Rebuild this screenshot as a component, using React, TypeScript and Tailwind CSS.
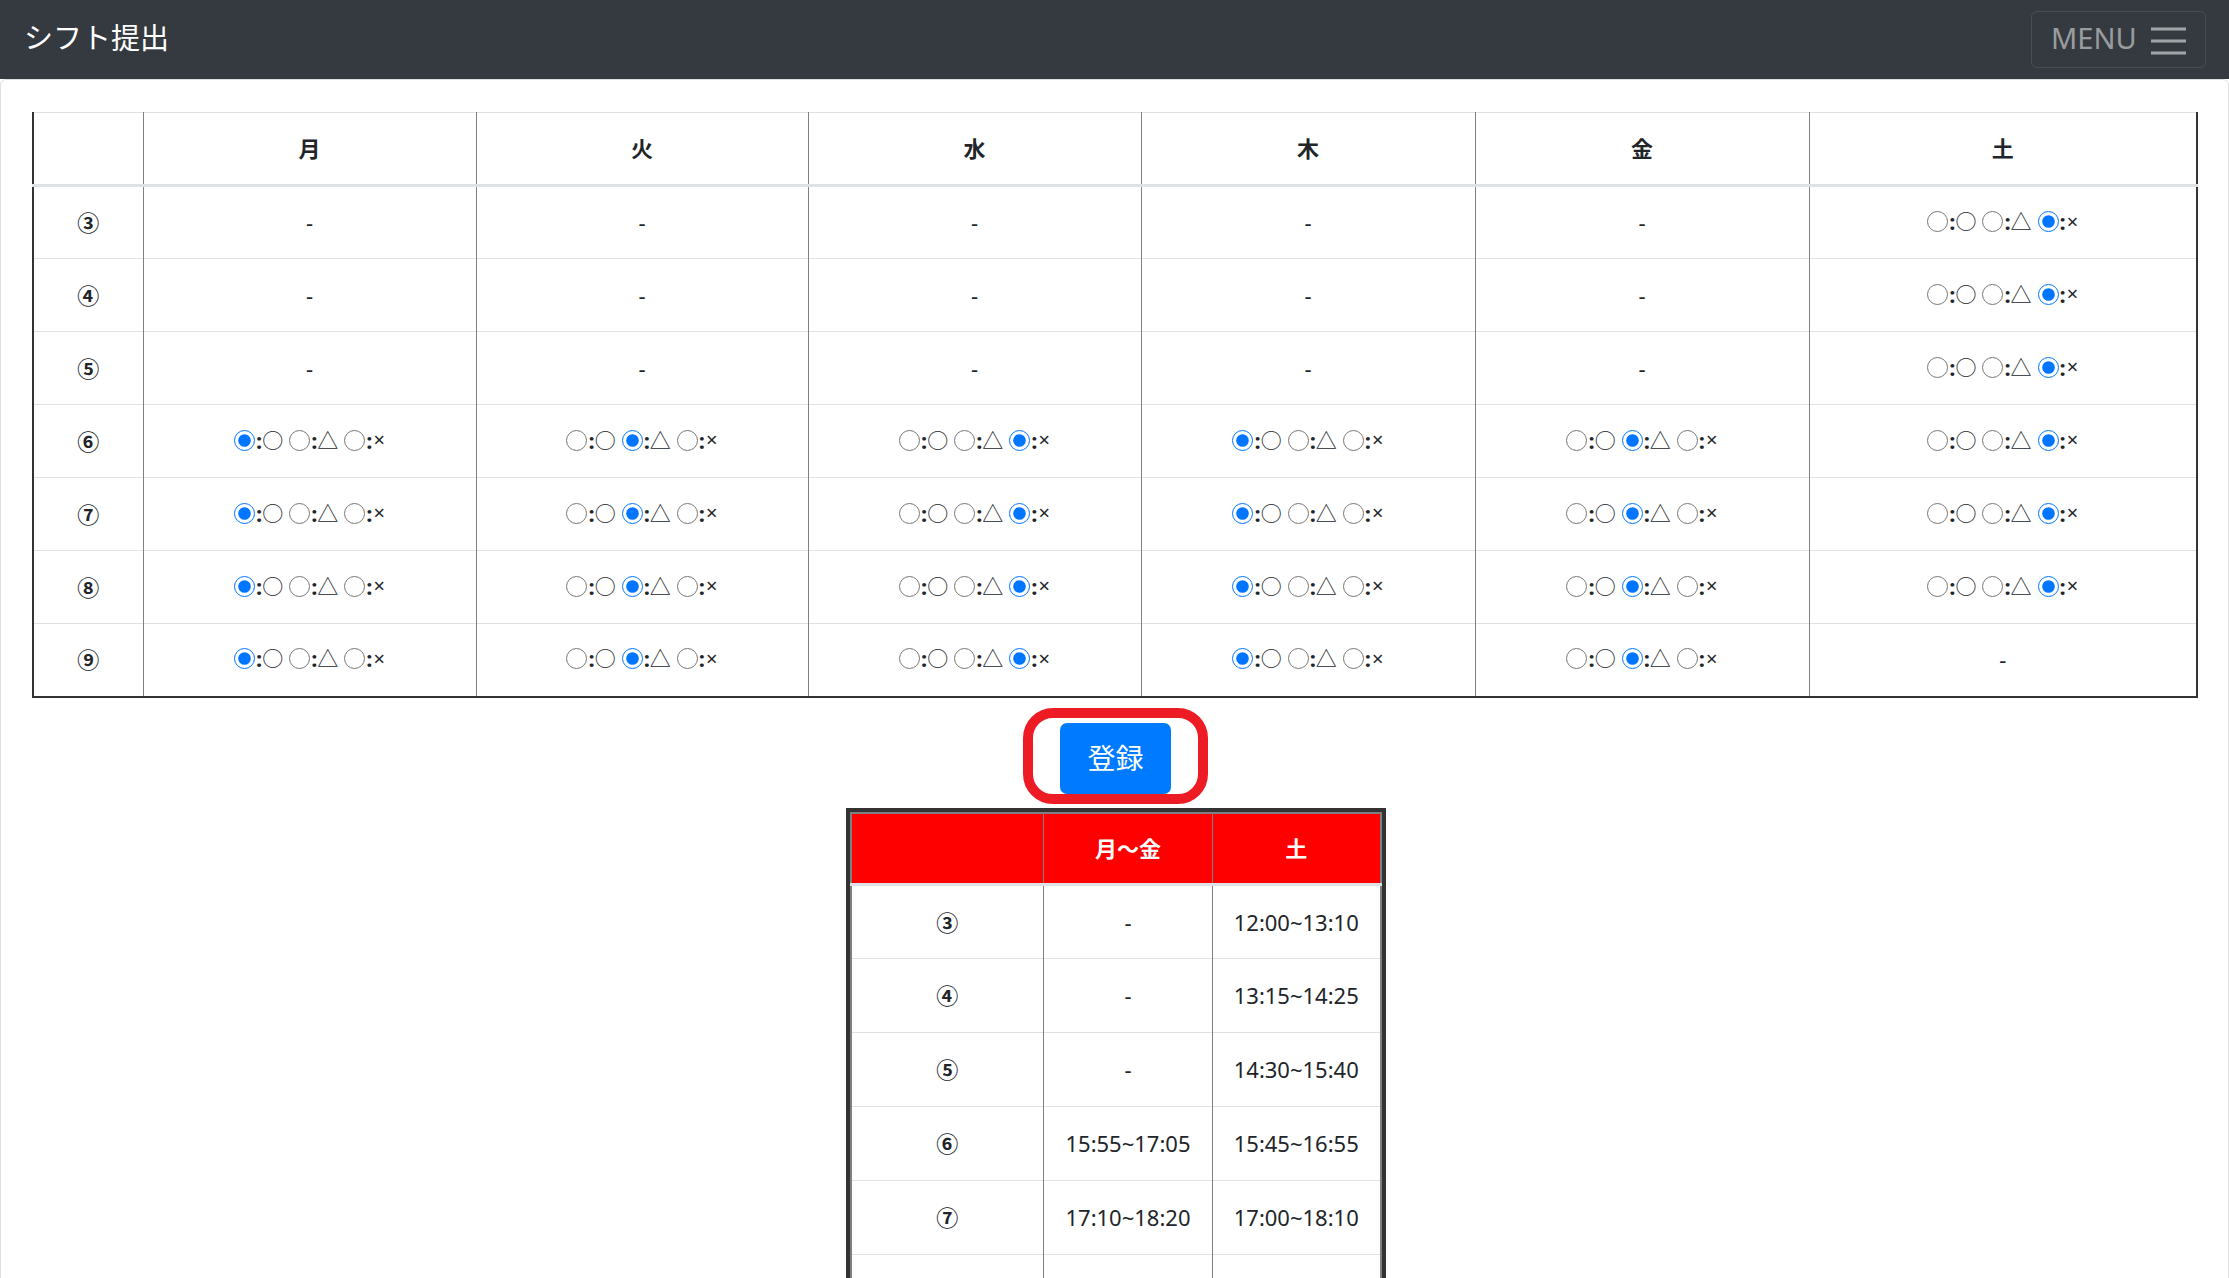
import React from "react";

const days = ["月", "火", "水", "木", "金", "土"];
const marks = ["○", "△", "×"];

// null = 入力なし, 0 = ○, 1 = △, 2 = ×
const shifts: { label: string; values: (number | null)[] }[] = [
  { label: "③", values: [null, null, null, null, null, 2] },
  { label: "④", values: [null, null, null, null, null, 2] },
  { label: "⑤", values: [null, null, null, null, null, 2] },
  { label: "⑥", values: [0, 1, 2, 0, 1, 2] },
  { label: "⑦", values: [0, 1, 2, 0, 1, 2] },
  { label: "⑧", values: [0, 1, 2, 0, 1, 2] },
  { label: "⑨", values: [0, 1, 2, 0, 1, null] },
];

const times = [
  { label: "③", weekday: "-", saturday: "12:00~13:10" },
  { label: "④", weekday: "-", saturday: "13:15~14:25" },
  { label: "⑤", weekday: "-", saturday: "14:30~15:40" },
  { label: "⑥", weekday: "15:55~17:05", saturday: "15:45~16:55" },
  { label: "⑦", weekday: "17:10~18:20", saturday: "17:00~18:10" },
  { label: "⑧", weekday: "18:25~19:35", saturday: "18:15~19:25" },
  { label: "⑨", weekday: "19:40~20:50", saturday: "-" },
];

function ShiftRadios({ name, value }: { name: string; value: number }) {
  return (
    <div className="inline-flex items-center gap-[6px]">
      {marks.map((mark, i) => (
        <label key={mark} className="inline-flex items-center">
          <input
            type="radio"
            name={name}
            defaultChecked={value === i}
            className="m-0 w-[21px] h-[21px]"
          />
          <span className="ml-[1px] font-bold">:</span>
          <span className={i === 2 ? "ml-[1px] text-[20px] leading-none" : "text-[21px] leading-none"}>
            {mark}
          </span>
        </label>
      ))}
    </div>
  );
}

export default function App() {
  return (
    <div className="min-h-screen bg-white text-[#212529] text-[22px] font-['Noto_Sans','Noto_Sans_CJK_JP',sans-serif]">
      {/* Navbar */}
      <nav className="h-[79px] bg-[#343a40] flex items-center justify-between pl-[24px] pr-[23px]">
        <span className="text-white text-[29px] leading-none -mt-[4px]">シフト提出</span>
        <button className="h-[57px] w-[175px] border border-white/10 rounded-[6px] flex items-center pl-[19px] gap-[14px] text-white/50">
          <span className="text-[29px] leading-none -mt-[5px]">MENU</span>
          <svg width="36" height="30" viewBox="0 0 36 30">
            <path d="M0 4h35M0 16h35M0 28h35" stroke="#a2a5a8" strokeWidth="3" />
          </svg>
        </button>
      </nav>

      {/* Card */}
      <div className="border border-[#dfdfdf] rounded-t-[6px] pt-[32px] pl-[31px] pr-[29px] pb-[80px]">
        <table className="w-[2166px] table-fixed border-collapse border-t border-t-[#dee2e6] border-l-2 border-r-2 border-b-2 border-l-[#333] border-r-[#333] border-b-[#333]">
          <colgroup>
            <col className="w-[110px]" />
            <col className="w-[333px]" />
            <col className="w-[332px]" />
            <col className="w-[333px]" />
            <col className="w-[334px]" />
            <col className="w-[334px]" />
            <col />
          </colgroup>
          <thead>
            <tr>
              <th className="h-[73px] border-b-[3px] border-b-[#dee2e6]"></th>
              {days.map((d) => (
                <th
                  key={d}
                  className="h-[73px] border-l border-l-[#808080] border-b-[3px] border-b-[#dee2e6] font-bold text-center align-middle"
                >
                  {d}
                </th>
              ))}
            </tr>
          </thead>
          <tbody>
            {shifts.map((row) => (
              <tr key={row.label}>
                <th className="h-[73px] border-t border-t-[#dee2e6] font-bold text-center align-middle">
                  {row.label}
                </th>
                {row.values.map((v, i) => (
                  <td
                    key={i}
                    className="h-[73px] border-t border-t-[#dee2e6] border-l border-l-[#808080] text-center align-middle"
                  >
                    {v === null ? "-" : <ShiftRadios name={`${row.label}-${days[i]}`} value={v} />}
                  </td>
                ))}
              </tr>
            ))}
          </tbody>
        </table>

        {/* 登録 */}
        <div className="flex justify-center mt-[25px]">
          <div className="relative">
            <button className="w-[111px] h-[71px] bg-[#007bff] rounded-[7px] text-white text-[28px]">
              登録
            </button>
            <div className="absolute left-[-37px] top-[-15px] w-[185px] h-[96px] border-[10px] border-[#ed1c24] rounded-[30px] pointer-events-none" />
          </div>
        </div>

        {/* 時間表 */}
        <div className="mx-auto mt-[14px] w-[540px] border-4 border-[#333]">
          <table className="w-full table-fixed border-collapse border-2 border-[#808080]">
            <colgroup>
              <col className="w-[193px]" />
              <col className="w-[169px]" />
              <col />
            </colgroup>
            <thead>
              <tr className="bg-[#ff0000] text-white">
                <th className="h-[72px] border-b-[3px] border-b-[#dee2e6]"></th>
                <th className="h-[72px] border-l border-l-[#808080] border-b-[3px] border-b-[#dee2e6] font-bold text-center">
                  月～金
                </th>
                <th className="h-[72px] border-l border-l-[#808080] border-b-[3px] border-b-[#dee2e6] font-bold text-center">
                  土
                </th>
              </tr>
            </thead>
            <tbody>
              {times.map((t) => (
                <tr key={t.label}>
                  <td className="h-[74px] border-t border-t-[#dee2e6] text-center font-bold">{t.label}</td>
                  <td className="h-[74px] border-t border-t-[#dee2e6] border-l border-l-[#808080] text-center">
                    {t.weekday}
                  </td>
                  <td className="h-[74px] border-t border-t-[#dee2e6] border-l border-l-[#808080] text-center">
                    {t.saturday}
                  </td>
                </tr>
              ))}
            </tbody>
          </table>
        </div>
      </div>
    </div>
  );
}
